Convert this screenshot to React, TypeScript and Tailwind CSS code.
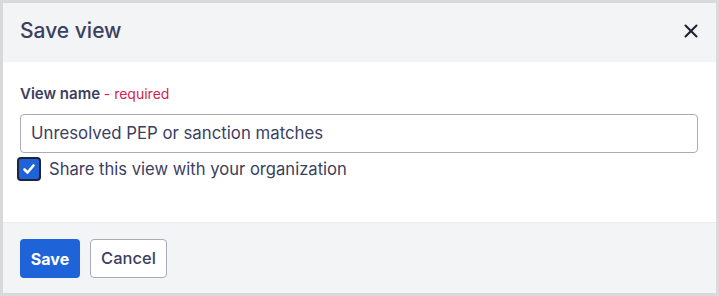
import { X } from 'lucide-react'

export default function App() {
  return (
    <div className="h-[296px] w-[719px] bg-[#d9d9d9] p-[3px] font-['Inter',sans-serif]">
      <div className="flex h-full flex-col bg-white">
        <div className="flex h-[59px] items-center justify-between bg-[#f3f4f6] pl-[17px] pr-[14px]">
          <h2 className="-mt-[3px] text-[21px] font-medium text-[#3c4060]">Save view</h2>
          <button type="button" className="-mt-[3px] text-[#1f2233]">
            <X className="h-[22px] w-[22px]" strokeWidth={2.3} />
          </button>
        </div>

        <div className="flex-1 px-[14px] pt-[21px]">
          <label className="block px-[3px] text-[15px] font-semibold text-[#3c4060]">
            View name <span className="text-[14px] font-normal text-[#d6244a]">- required</span>
          </label>
          <input
            readOnly
            value="Unresolved PEP or sanction matches"
            className="mt-[8px] ml-[3px] block h-[39px] w-[678px] rounded border border-[#a9abb8] px-[10px] text-[16.8px] text-[#3c4060] outline-none"
          />
          <label className="mt-[4px] flex items-center gap-2 text-[16.6px] text-[#3c4060]">
            <span className="flex h-6 w-6 items-center justify-center rounded-[4px] border-2 border-[#1e2340] bg-[#1f63d9]">
              <svg viewBox="0 0 16 16" className="h-[16px] w-[16px]" fill="none" stroke="white" strokeWidth={2.6} strokeLinecap="round" strokeLinejoin="round">
                <path d="M3.5 8.5l3 3 6-7" />
              </svg>
            </span>
            Share this view with your organization
          </label>
        </div>

        <div className="flex h-[71px] items-start gap-[10px] border-t border-[#ebecef] bg-[#f3f4f6] px-[17px] pt-4">
          <button type="button" className="h-[39px] w-[60px] rounded bg-[#1f63d9] text-[16px] font-bold text-white">
            Save
          </button>
          <button type="button" className="h-[39px] w-[77px] rounded border border-[#a9abb8] bg-white text-[16.5px] font-medium text-[#3c4060]">
            Cancel
          </button>
        </div>
      </div>
    </div>
  )
}
